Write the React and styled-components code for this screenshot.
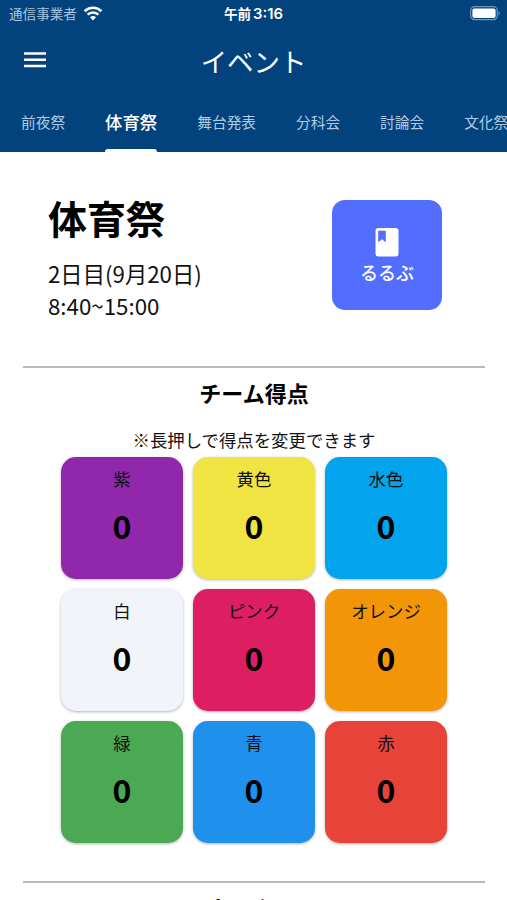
import styled, { createGlobalStyle } from "styled-components";

const tabs = ["前夜祭", "体育祭", "舞台発表", "分科会", "討論会", "文化祭"];

const teams = [
  { name: "紫", color: "#9127aa", score: 0 },
  { name: "黄色", color: "#f0e442", score: 0 },
  { name: "水色", color: "#03a4ee", score: 0 },
  { name: "白", color: "#f1f5f9", score: 0 },
  { name: "ピンク", color: "#de1e62", score: 0 },
  { name: "オレンジ", color: "#f29507", score: 0 },
  { name: "緑", color: "#4aa952", score: 0 },
  { name: "青", color: "#1f90ec", score: 0 },
  { name: "赤", color: "#e74338", score: 0 },
];

const App = () => {
  return (
    <Screen>
      <GlobalStyle />
      <Header>
        <StatusBar>
          <Carrier>
            <span>通信事業者</span>
            <svg width="20" height="15" viewBox="0 0 20 15" fill="none" stroke="#fff">
              <path d="M1.6 5.2a12 12 0 0 1 16.8 0" strokeWidth="2.7" />
              <path d="M4.6 8.6a7.8 7.8 0 0 1 10.8 0" strokeWidth="2.6" />
              <path d="M10 14.4 7 11.3a4.2 4.2 0 0 1 6 0z" fill="#fff" stroke="none" />
            </svg>
          </Carrier>
          <Time>
            午前 <b>3:16</b>
          </Time>
          <Battery>
            <svg width="31" height="15" viewBox="0 0 31 15">
              <rect x="0.7" y="0.7" width="26.6" height="13" rx="4" fill="none" stroke="#6f96bd" strokeWidth="1.2" />
              <rect x="2.4" y="2.4" width="23.2" height="9.6" rx="2" fill="#fff" />
              <path d="M28.6 5v4.4c1.7-.7 1.7-3.7 0-4.4z" fill="#6f96bd" />
            </svg>
          </Battery>
        </StatusBar>
        <Toolbar>
          <MenuButton aria-label="menu">
            <svg width="22" height="16" viewBox="0 0 22 16" fill="#fff">
              <path d="M0 .3h22v2.5H0zM0 6.5h22V9H0zM0 12.7h22v2.5H0z" />
            </svg>
          </MenuButton>
          <PageTitle>イベント</PageTitle>
        </Toolbar>
        <Tabs>
          {tabs.map((tab) => (
            <Tab key={tab} $active={tab === "体育祭"}>
              {tab}
            </Tab>
          ))}
        </Tabs>
      </Header>
      <Summary>
        <div>
          <EventName>体育祭</EventName>
          <EventDate>2日目(9月20日)</EventDate>
          <EventDate>8:40~15:00</EventDate>
        </div>
        <GuideButton>
          <svg width="24" height="30" viewBox="0 0 24 30">
            <rect x="0.5" y="1" width="23" height="28.5" rx="3" fill="#fff" />
            <path d="M3.2 3.7h7.6v11.6l-3.8-3-3.8 3z" fill="#536dfe" />
          </svg>
          るるぶ
        </GuideButton>
      </Summary>
      <Section>
        <SectionTitle>チーム得点</SectionTitle>
        <Note>※長押しで得点を変更できます</Note>
        <Grid>
          {teams.map((team) => (
            <Card key={team.name} $color={team.color}>
              <TeamName>{team.name}</TeamName>
              <Score>{team.score}</Score>
            </Card>
          ))}
        </Grid>
      </Section>
      <Section>
        <SectionTitle $offset={9}>プログラム</SectionTitle>
      </Section>
    </Screen>
  );
};

const GlobalStyle = createGlobalStyle`
  * {
    box-sizing: border-box;
  }
  body {
    margin: 0;
    overflow: hidden;
    background: #fff;
  }
`;
const Screen = styled.div`
  height: 900px;
  overflow: hidden;
  background: #fff;
  color: #111;
  font-family: "Noto Sans CJK JP", sans-serif;
`;
const Header = styled.header`
  height: 152px;
  background: #02437e;
  color: #fff;
`;
const StatusBar = styled.div`
  display: grid;
  grid-template-columns: 1fr auto 1fr;
  align-items: center;
  height: 27px;
  padding: 0 6px 0 9px;
`;
const Carrier = styled.div`
  display: flex;
  align-items: center;
  gap: 6px;
  color: #a9c3dc;
  font-size: 13.6px;
  line-height: 26px;
  span {
    margin-top: -2px;
  }
`;
const Time = styled.div`
  margin-right: 3px;
  font-size: 13.5px;
  font-weight: 700;
  line-height: 26px;
  b {
    margin-left: -1px;
    font-family: Inter, sans-serif;
    font-size: 14.8px;
    font-weight: 600;
  }
`;
const Battery = styled.div`
  display: flex;
  justify-content: flex-end;
`;
const Toolbar = styled.div`
  display: grid;
  grid-template-columns: 1fr auto 1fr;
  align-items: center;
  height: 65px;
  padding: 0 24px;
`;
const MenuButton = styled.button`
  display: flex;
  width: 22px;
  padding: 0;
  border: none;
  background: none;
`;
const PageTitle = styled.h1`
  margin: 2px 0 0;
  font-size: 26.4px;
  font-weight: 400;
  line-height: 40px;
`;
const Tabs = styled.nav`
  display: flex;
  height: 60px;
  padding-left: 1px;
  overflow: hidden;
`;
const Tab = styled.div`
  display: flex;
  flex: none;
  flex-direction: column;
  justify-content: center;
  margin: 0 20px;
  padding-bottom: 2px;
  color: #b3cbe2;
  font-size: 14.7px;
  ${(props) =>
    props.$active &&
    `
    justify-content: space-between;
    padding: 17px 0 0;
    color: #fff;
    font-size: 17.4px;
    font-weight: 500;
    line-height: 26px;
    &::after {
      content: "";
      height: 2.6px;
      border-radius: 3px 3px 0 0;
      background: #fff;
    }
  `}
`;
const Summary = styled.section`
  display: flex;
  justify-content: space-between;
  align-items: flex-start;
  height: 214px;
  padding: 48px 65px 0 48px;
`;
const EventName = styled.h2`
  margin: -11px 0 12px;
  color: #000;
  font-size: 39px;
  font-weight: 700;
  line-height: 56px;
`;
const EventDate = styled.p`
  margin: 0;
  font-size: 22.3px;
  line-height: 32px;
`;
const GuideButton = styled.button`
  display: flex;
  flex-direction: column;
  align-items: center;
  gap: 2px;
  width: 110px;
  height: 110px;
  padding: 27px 0 0;
  border: none;
  border-radius: 13px;
  background: #536dfe;
  color: #fff;
  font-family: inherit;
  font-size: 18px;
  font-weight: 500;
  line-height: 26px;
`;
const Section = styled.section`
  margin: 0 22px 0 23px;
  border-top: 2px solid #b9b9b9;
  text-align: center;
`;
const SectionTitle = styled.h3`
  margin: ${(props) => props.$offset || 8}px 0 0;
  color: #000;
  font-size: 22px;
  font-weight: 700;
  line-height: 32px;
`;
const Note = styled.p`
  margin: 19px 0 4px;
  font-size: 17.4px;
  line-height: 26px;
`;
const Grid = styled.div`
  display: grid;
  grid-template-columns: repeat(3, 122px);
  grid-auto-rows: 122px;
  gap: 10px;
  justify-content: center;
  margin-bottom: 38px;
`;
const Card = styled.div`
  padding-top: 9px;
  border-radius: 15px;
  background: ${(props) => props.$color};
  box-shadow: 0 1px 3px rgba(0, 0, 0, 0.3);
`;
const TeamName = styled.div`
  font-size: 17.4px;
  line-height: 26px;
`;
const Score = styled.div`
  margin-top: 9px;
  color: #000;
  font-size: 32px;
  font-weight: 700;
  line-height: 48px;
`;

export default App;
